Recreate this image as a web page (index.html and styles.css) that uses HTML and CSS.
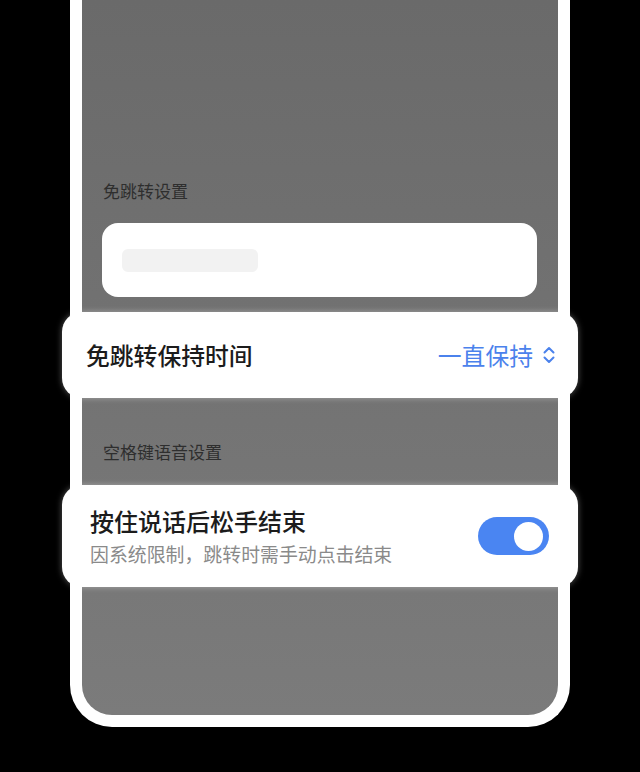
FILE: index.html
```html
<!DOCTYPE html>
<html lang="zh-CN">
<head>
<meta charset="utf-8">
<link rel="stylesheet" href="styles.css">
</head>
<body>
<div class="phone">
  <div class="screen">
    <div class="label label-first">免跳转设置</div>
    <div class="card">
      <div class="placeholder"></div>
    </div>
    <div class="float-card row-one">
      <div class="title">免跳转保持时间</div>
      <div class="value">
        <span>一直保持</span>
        <svg class="chev" width="14" height="20" viewBox="0 0 14 20" fill="none" stroke="#4b82ec" stroke-width="2" stroke-linecap="round" stroke-linejoin="round">
          <path d="M2.5 7.5 L7 3 L11.5 7.5"/>
          <path d="M2.5 12.5 L7 17 L11.5 12.5"/>
        </svg>
      </div>
    </div>
    <div class="label label-second">空格键语音设置</div>
    <div class="float-card row-two">
      <div class="texts">
        <div class="title">按住说话后松手结束</div>
        <div class="sub">因系统限制，跳转时需手动点击结束</div>
      </div>
      <div class="toggle"><div class="knob"></div></div>
    </div>
  </div>
</div>
</body>
</html>
```
FILE: styles.css
```css
html, body {
  margin: 0;
  padding: 0;
}
body {
  background: #000;
  width: 640px;
  height: 772px;
  overflow: hidden;
  font-family: "Noto Sans CJK SC", "Noto Sans", sans-serif;
}
.phone {
  margin-left: 70px;
  width: 500px;
  height: 727px;
  box-sizing: border-box;
  border: 12px solid #fff;
  border-top: 0;
  border-radius: 0 0 42px 42px;
  background: linear-gradient(#6a6a6a, #7b7b7b);
}
.screen {
  padding-top: 179px;
}
.label {
  margin-left: 21px;
  font-size: 17px;
  line-height: 24px;
  color: #2e2e2e;
}
.card {
  margin: 20px 21px 0 20px;
  height: 74px;
  background: #fff;
  border-radius: 16px;
  display: flex;
  align-items: center;
  padding-left: 20px;
}
.placeholder {
  width: 136px;
  height: 23px;
  border-radius: 6px;
  background: #f2f2f2;
}
.float-card {
  margin-left: -20px;
  width: 516px;
  background: #fff;
  border-radius: 20px;
  box-shadow: 0 0 6px rgba(255,255,255,0.35);
  display: flex;
  align-items: center;
  justify-content: space-between;
  box-sizing: border-box;
}
.row-one {
  margin-top: 15px;
  height: 86px;
  padding: 0 22px 0 24px;
}
.title {
  font-size: 23.8px;
  line-height: 32px;
  font-weight: 500;
  color: #1c1c1c;
}
.value {
  display: flex;
  align-items: center;
  gap: 9px;
  color: #4b82ec;
  font-size: 23.8px;
  line-height: 32px;
}
.chev {
  display: block;
}
.label-second {
  margin-top: 42px;
}
.row-two {
  margin-top: 21px;
  height: 102px;
  padding: 0 29px 0 28px;
}
.row-two .title {
  font-size: 24px;
}
.sub {
  margin-top: 4px;
  font-size: 18.9px;
  line-height: 26px;
  color: #8a8a8a;
}
.toggle {
  width: 71px;
  height: 38px;
  border-radius: 19px;
  background: #4a85f2;
  display: flex;
  align-items: center;
  justify-content: flex-end;
  padding-right: 6px;
  box-sizing: border-box;
}
.knob {
  width: 29px;
  height: 29px;
  border-radius: 50%;
  background: #fff;
}
```
